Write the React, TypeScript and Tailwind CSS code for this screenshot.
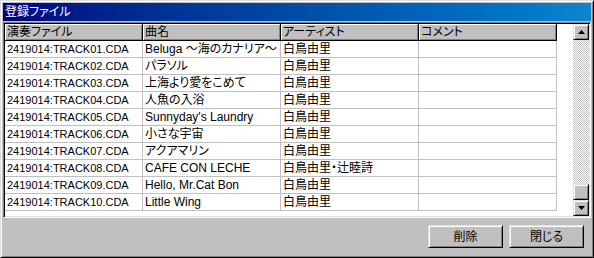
import React from 'react';

const rows: string[][] = [
  ['2419014:TRACK01.CDA', 'Beluga 〜海のカナリア〜', '白鳥由里', ''],
  ['2419014:TRACK02.CDA', 'パラソル', '白鳥由里', ''],
  ['2419014:TRACK03.CDA', '上海より愛をこめて', '白鳥由里', ''],
  ['2419014:TRACK04.CDA', '人魚の入浴', '白鳥由里', ''],
  ['2419014:TRACK05.CDA', "Sunnyday's Laundry", '白鳥由里', ''],
  ['2419014:TRACK06.CDA', '小さな宇宙', '白鳥由里', ''],
  ['2419014:TRACK07.CDA', 'アクアマリン', '白鳥由里', ''],
  ['2419014:TRACK08.CDA', 'CAFE CON LECHE', '白鳥由里・辻睦詩', ''],
  ['2419014:TRACK09.CDA', 'Hello, Mr.Cat Bon', '白鳥由里', ''],
  ['2419014:TRACK10.CDA', 'Little Wing', '白鳥由里', ''],
];

const headers = ['演奏ファイル', '曲名', 'アーティスト', 'コメント'];

const raised =
  'border border-t-[#dfdfdf] border-l-[#dfdfdf] border-r-black border-b-black bg-[#c0c0c0] shadow-[inset_1px_1px_0_#ffffff,inset_-1px_-1px_0_#808080]';

const Arrow = ({ up }: { up?: boolean }) => (
  <svg width="7" height="4" viewBox="0 0 7 4">
    <polygon points={up ? '3.5,0 7,4 0,4' : '0,0 7,0 3.5,4'} fill="#000" />
  </svg>
);

const Button = ({ label }: { label: string }) => (
  <div className={`${raised} w-[75px] h-[23px] flex items-center justify-center text-[12px] text-black`}>
    {label}
  </div>
);

export default function App() {
  return (
    <div className="w-[594px] h-[258px] bg-[#c0c0c0] border border-t-[#dfdfdf] border-l-[#dfdfdf] border-r-black border-b-black shadow-[inset_1px_1px_0_#ffffff,inset_-1px_-1px_0_#808080] p-[2px] flex flex-col font-['Liberation_Sans','Noto_Sans_CJK_JP',sans-serif] [font-feature-settings:'palt'] select-none">
      {/* title bar */}
      <div className="h-[18px] bg-linear-to-r from-[#000080] to-[#1084d0] flex items-center pl-[2px] text-white text-[12px] leading-none">
        登録ファイル
      </div>

      {/* list box */}
      <div className="mt-[1px] h-[196px] border border-t-[#808080] border-l-[#808080] border-r-white border-b-white shadow-[inset_1px_1px_0_#000000,inset_-1px_-1px_0_#dfdfdf] p-[1px] flex">
        <div className="flex-1 bg-white overflow-hidden">
          <div className="flex">
            {headers.map((h) => (
              <div
                key={h}
                className="w-[138px] h-[17px] shrink-0 bg-[#c0c0c0] border-r border-b border-black shadow-[inset_1px_1px_0_#ffffff,inset_-1px_-1px_0_#808080] pl-[2px] text-[12px] leading-[16px] text-black"
              >
                {h}
              </div>
            ))}
          </div>
          {rows.map((r, i) => (
            <div key={i} className="flex w-[552px] h-[17px] border-b border-[#c0c0c0]">
              {r.map((c, j) => (
                <div
                  key={j}
                  className={`w-[138px] shrink-0 border-r border-[#c0c0c0] pl-[2px] leading-[16px] text-black whitespace-nowrap overflow-hidden ${
                    j === 0 ? 'text-[11px]' : 'text-[12px]'
                  }`}
                >
                  {c}
                </div>
              ))}
            </div>
          ))}
        </div>

        {/* scrollbar */}
        <div className="w-[16px] flex flex-col">
          <div className={`${raised} h-[16px] flex items-center justify-center`}>
            <Arrow up />
          </div>
          <div className="flex-1 bg-[repeating-conic-gradient(#c0c0c0_0%_25%,#ffffff_0%_50%)] bg-size-[2px_2px]" />
          <div className={`${raised} h-[16px]`} />
          <div className={`${raised} h-[16px] flex items-center justify-center`}>
            <Arrow />
          </div>
        </div>
      </div>

      {/* buttons */}
      <div className="mt-[7px] flex justify-end gap-[6px] pr-[7px]">
        <Button label="削除" />
        <Button label="閉じる" />
      </div>
    </div>
  );
}
